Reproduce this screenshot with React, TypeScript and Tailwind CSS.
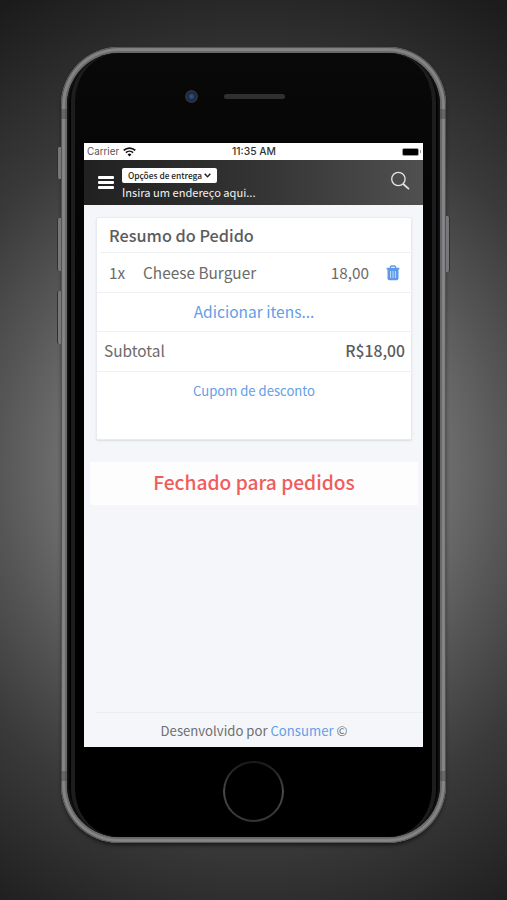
import { FaChevronDown } from "react-icons/fa";

const LEFT_BUTTONS = [
    { id: "mute", place: "top-[100px] h-[32px]" },
    { id: "volume-up", place: "top-[171px] h-[53px]" },
    { id: "volume-down", place: "top-[244px] h-[53px]" },
];

const ANTENNA_BANDS = [
    { id: "top-left", place: "left-0 top-[62px]" },
    { id: "top-right", place: "right-0 top-[62px]" },
    { id: "bottom-left", place: "left-0 bottom-[62px]" },
    { id: "bottom-right", place: "right-0 bottom-[62px]" },
];

function WifiIcon() {
    return (
        <svg width="13" height="10" viewBox="0 0 13 10" fill="none" stroke="#111" strokeWidth="1.7">
            <path d="M.7 3.4a8.3 8.3 0 0 1 11.6 0" />
            <path d="M2.9 5.7a5.2 5.2 0 0 1 7.2 0" />
            <path d="M6.5 9.6 4.6 7.5a2.8 2.8 0 0 1 3.8 0z" fill="#111" stroke="none" />
        </svg>
    );
}

function ChevronIcon() {
    return <FaChevronDown size={7} stroke="currentColor" strokeWidth={40} />;
}

function SearchIcon() {
    return (
        <svg width="20" height="20" viewBox="0 0 20 20" fill="none" stroke="#e6e6e6" strokeWidth="1.3">
            <circle cx="8.4" cy="8" r="6.7" />
            <path d="M13.2 13l5.8 5.2" strokeWidth="1.7" />
        </svg>
    );
}

function TrashIcon() {
    return (
        <svg width="14" height="16" viewBox="0 0 14 16" fill="none">
            <path d="M4.4 3V2.2Q4.4 1 5.6 1h2.8q1.2 0 1.2 1.2V3" stroke="#5c99e6" strokeWidth="1.3" />
            <path d="M.6 2.8h12.8v1.6H.6z" fill="#5c99e6" />
            <path d="M1.5 4h11v9.4q0 1.8-1.8 1.8H3.3q-1.8 0-1.8-1.8z" fill="#5c99e6" />
            <path d="M4.6 6v7M7 6v7M9.4 6v7" stroke="#c3dafa" strokeWidth="1" />
        </svg>
    );
}

function StatusBar() {
    return (
        <div className="grid h-[17px] shrink-0 grid-cols-3 items-center bg-white pl-[3px] pr-[2px] font-['Inter','Liberation_Sans',sans-serif] text-[9.8px] leading-none text-[#333]">
            <div className="flex items-center gap-[4px]">
                <span className="text-[#555]">Carrier</span>
                <WifiIcon />
            </div>
            <span className="text-center text-[10.3px] font-medium">11:35 AM</span>
            <div className="flex items-center justify-end gap-px">
                <span className="h-[8px] w-[17px] rounded-[2px] border border-[#999] bg-black" />
                <span className="h-[3px] w-px bg-[#999]" />
            </div>
        </div>
    );
}

function Header() {
    return (
        <header className="flex h-[45px] shrink-0 bg-linear-to-r from-[#212121] via-[#333] to-[#505050] pl-[14px] pr-[13px]">
            <button className="mt-[16px] flex h-[13px] w-[16px] flex-col justify-between">
                <span className="h-[2.6px] w-full rounded-[1px] bg-white" />
                <span className="h-[2.6px] w-full rounded-[1px] bg-white" />
                <span className="h-[2.6px] w-full rounded-[1px] bg-white" />
            </button>
            <div className="ml-[8px] flex flex-1 flex-col items-start pt-[8px]">
                <button className="flex h-[15px] w-[95px] items-center justify-center gap-[2px] rounded-[2px] bg-white text-[8.4px] font-medium leading-none text-[#222]">
                    Opções de entrega
                    <ChevronIcon />
                </button>
                <span className="mt-px text-[11.1px] leading-[16px] text-[#f2f2f2]">Insira um endereço aqui...</span>
            </div>
            <button className="mt-[11px] h-[20px]">
                <SearchIcon />
            </button>
        </header>
    );
}

function OrderSummary() {
    return (
        <section className="ml-[12px] mr-[11px] mt-[12px] flex h-[223px] shrink-0 flex-col rounded-[2px] border border-[#e8ebef] bg-white text-[#6b6b6b] shadow-[0_1px_2px_rgba(0,0,0,0.1)]">
            <h1 className="ml-[3px] h-[35px] border-b border-[#eff1f3] pl-[9px] text-[16.25px] font-medium leading-[34px] text-[#5c5c5c]">
                Resumo do Pedido
            </h1>
            <div className="flex h-[40px] items-center border-b border-[#eff1f3] pl-[12px] pr-[11px] text-[15.4px]">
                <span className="w-[34px]">1x</span>
                <span className="flex-1">Cheese Burguer</span>
                <span className="mr-[17px] text-[15.3px]">18,00</span>
                <TrashIcon />
            </div>
            <a className="h-[39px] border-b border-[#eff1f3] text-center text-[15.5px] leading-[36px] text-[#649de8]">
                Adicionar itens...
            </a>
            <div className="flex h-[40px] items-center justify-between border-b border-[#eff1f3] pb-px pl-[7px] pr-[6px] text-[15.4px]">
                <span>Subtotal</span>
                <span className="text-[15.7px] font-medium text-[#5c5c5c]">R$18,00</span>
            </div>
            <a className="text-center text-[13.1px] leading-[38px] text-[#649de8]">Cupom de desconto</a>
        </section>
    );
}

function Screen() {
    return (
        <div className="flex h-[604px] w-[339px] flex-col bg-[#f4f6f9] font-['Noto_Sans_CJK_JP',sans-serif]">
            <StatusBar />
            <Header />
            <OrderSummary />
            <p className="ml-[6px] mr-[5px] mt-[22px] h-[43px] shrink-0 bg-[#fdfdfd] text-center text-[19.2px] font-medium leading-[41px] text-[#f05c5c]">
                Fechado para pedidos
            </p>
            <footer className="ml-[12px] mt-auto h-[35px] border-t border-[#eaedf1] pr-[11px] text-center text-[13.15px] leading-[35px] text-[#6f6f6f]">
                Desenvolvido por <a className="text-[#649de8]">Consumer</a> ©
            </footer>
        </div>
    );
}

export default function App() {
    return (
        <div className="flex h-[900px] w-[507px] items-start overflow-hidden bg-[radial-gradient(ellipse_500px_535px_at_50%_52%,#747474_0%,#6a6a6a_40%,#565656_51%,#464646_61%,#3a3a3a_69%,#292929_86%,#1b1b1b_100%)] pl-[61px] pt-[47px]">
            <div className="relative h-[796px] w-[385px] rounded-[58px] bg-[#68686b] p-[6px] shadow-[0_3px_4px_-1px_rgba(0,0,0,0.6),inset_0_0_1px_1px_#505052,inset_0_0_1px_4px_#868688]">
                {LEFT_BUTTONS.map((button) => (
                    <span key={button.id} className={`absolute -left-[4px] w-[4px] rounded-l-[2px] border-l border-[#303030] bg-[#77777a] ${button.place}`} />
                ))}
                <span className="absolute -right-[4px] top-[169px] h-[56px] w-[4px] rounded-r-[2px] border-r border-[#303030] bg-[#77777a]" />
                {ANTENNA_BANDS.map((band) => (
                    <span key={band.id} className={`absolute h-[10px] w-[6px] bg-[#3c3c3e]/40 ${band.place}`} />
                ))}

                <div className="relative h-full rounded-[52px] bg-black px-[4px] shadow-[inset_0_0_2px_2px_#141414]">
                    <div className="flex h-full flex-col items-center rounded-[48px] border-x-[4px] border-[#1d1d1d] bg-linear-to-b from-[#090909] to-black">
                        <div className="flex h-[90px] w-full shrink-0 items-start pl-[110px] pt-[37px]">
                            <span className="flex size-[13px] items-center justify-center rounded-full bg-[#303236]">
                                <span className="size-[9px] rounded-full bg-[radial-gradient(circle,#355490_10%,#172748_60%,#101622)]" />
                            </span>
                            <span className="ml-[26px] mt-[4px] h-[5px] w-[61px] rounded-full bg-[#303030]" />
                        </div>
                        <Screen />
                        <div className="mt-[14px] size-[61px] rounded-full bg-linear-to-b from-[#181818] via-[#4b4b4b] to-[#333] p-[2px]">
                            <div className="size-full rounded-full bg-black" />
                        </div>
                    </div>
                </div>
            </div>
        </div>
    );
}
